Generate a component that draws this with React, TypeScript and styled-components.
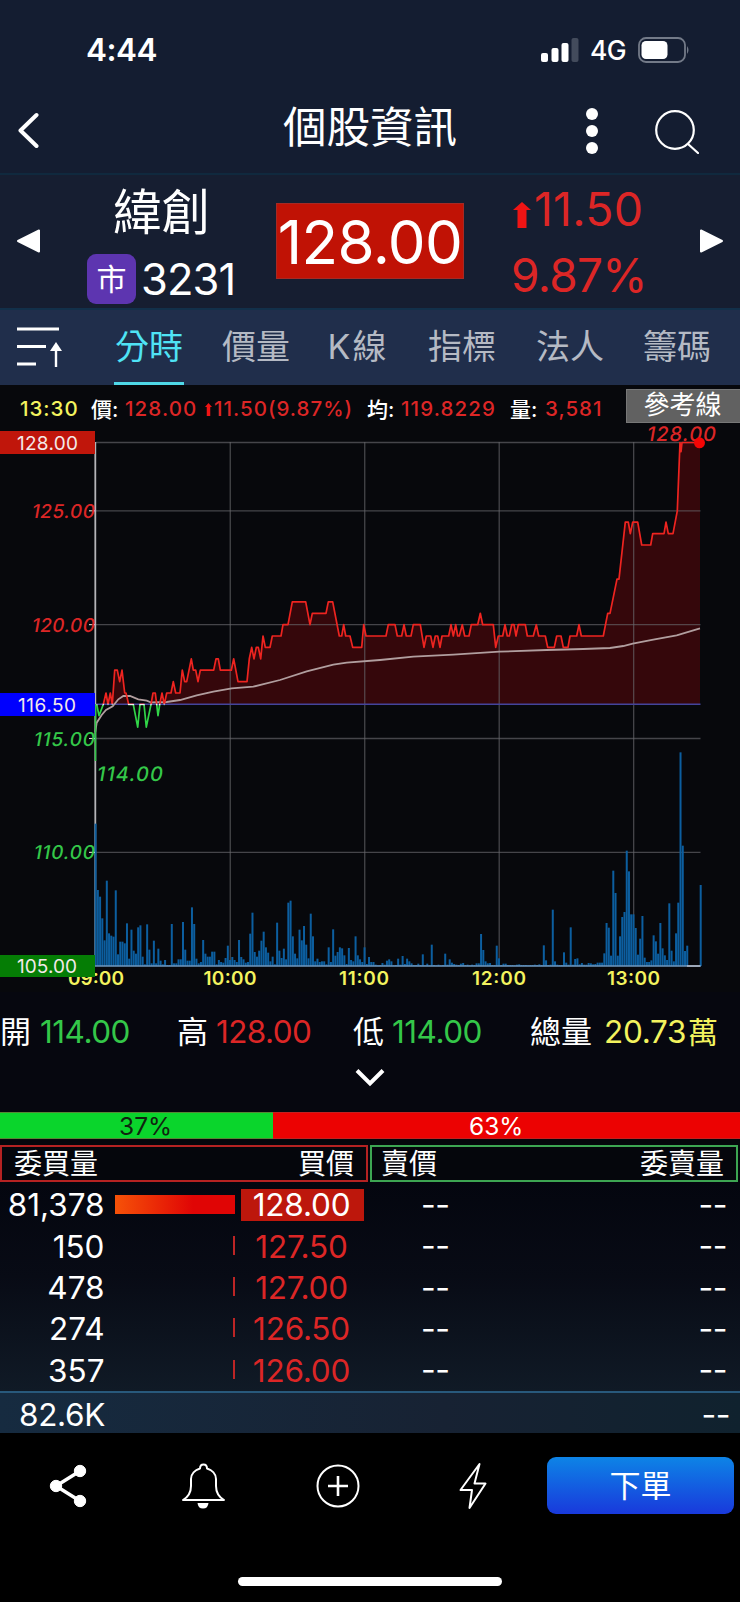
import React from 'react';
import styled, { createGlobalStyle } from 'styled-components';

const RED = '#dc2626';
const GREEN = '#34c749';
const YELLOW = '#f3f35e';

const GlobalStyle = createGlobalStyle`
  * { box-sizing: border-box; }
  body {
    margin: 0;
    background: #000;
    font-family: Inter, 'Noto Sans CJK TC', sans-serif;
    color: #fff;
  }
  svg { display: block; flex: none; }
`;

const Screen = styled.div`
  width: 740px;
  height: 1602px;
  display: flex;
  flex-direction: column;
  overflow: hidden;
  background: #05060c;
`;

const Label = styled.span<{ $size: number; $color?: string; $ls?: number; $weight?: number; $ml?: number; $width?: number; $align?: string }>`
  display: block;
  flex: none;
  white-space: nowrap;
  line-height: 1;
  font-size: ${(p) => p.$size}px;
  color: ${(p) => p.$color ?? '#fff'};
  letter-spacing: ${(p) => p.$ls ?? 0}px;
  font-weight: ${(p) => p.$weight ?? 400};
  margin-left: ${(p) => p.$ml ?? 0}px;
  width: ${(p) => (p.$width ? `${p.$width}px` : 'auto')};
  text-align: ${(p) => p.$align ?? 'left'};
`;

const StatusBar = styled.div`
  height: 84px;
  padding: 16px 50px 0 86px;
  display: flex;
  align-items: center;
  justify-content: space-between;
  background: #141d31;
`;

const StatusRight = styled.div`
  display: flex;
  align-items: center;
`;

const NavBar = styled.div`
  height: 91px;
  display: grid;
  grid-template-columns: 283px 174px 1fr 44px;
  align-items: center;
  padding: 0 41px 2px 0;
  background: #141d31;
  border-bottom: 2px solid #10293e;
`;

const NavCell = styled.div<{ $pl?: number; $pt?: number; $justify?: string }>`
  display: flex;
  justify-content: ${(p) => p.$justify ?? 'flex-start'};
  padding-left: ${(p) => p.$pl ?? 0}px;
  padding-top: ${(p) => p.$pt ?? 0}px;
`;

const Quote = styled.div`
  height: 133px;
  display: grid;
  grid-template-columns: 87px 189px 188px 49px 187px 40px;
  background: #161e31;
  align-items: start;
`;

const Arrow = styled.div<{ $pl?: number }>`
  padding: 54px 0 0 ${(p) => p.$pl ?? 0}px;
`;

const QuoteName = styled.div`
  padding-top: 14.5px;
  display: flex;
  flex-direction: column;
`;

const CodeRow = styled.div`
  margin-top: 16.5px;
  display: flex;
  align-items: center;
`;

const MarketBadge = styled.div`
  width: 49px;
  height: 50px;
  border-radius: 9px;
  background: #5d35b0;
  display: flex;
  align-items: center;
  justify-content: center;
`;

const PriceBox = styled.div`
  margin-top: 28px;
  height: 76px;
  padding-top: 2px;
  background: #c01205;
  border: 1px solid #a62a24;
  display: flex;
  align-items: center;
  justify-content: center;
`;

const Change = styled.div`
  display: flex;
  flex-direction: column;
`;

const ChangeRow = styled.div<{ $pt: number }>`
  padding-top: ${(p) => p.$pt}px;
  display: flex;
  align-items: center;
`;

const ArrowSlot = styled.div`
  padding-top: 12px;
`;

const TabBar = styled.div`
  height: 77px;
  display: flex;
  align-items: stretch;
  padding-left: 17px;
  background: #202e4b;
  border-top: 2px solid #12304a;
`;

const TabIcon = styled.div`
  width: 97px;
  padding-top: 17px;
`;

const Tab = styled.div<{ $active?: boolean; $gap: number; $ls?: number }>`
  width: 70px;
  margin-right: ${(p) => p.$gap}px;
  padding-top: 17px;
  text-align: center;
  white-space: nowrap;
  font-size: 34px;
  line-height: 40px;
  letter-spacing: ${(p) => p.$ls ?? 0}px;
  color: ${(p) => (p.$active ? '#4fe3f5' : '#b5bac4')};
  border-bottom: ${(p) => (p.$active ? '3px solid #4fd8e8' : 'none')};
`;

const ChartPanel = styled.div`
  height: 607px;
  display: flex;
  flex-direction: column;
  background: #07080c;
`;

const InfoRow = styled.div`
  height: 38px;
  padding-top: 4px;
  display: flex;
  align-items: flex-start;
`;

const InfoItem = styled.div<{ $ml: number }>`
  height: 41px;
  margin-left: ${(p) => p.$ml}px;
  display: flex;
  align-items: center;
`;

const RefLine = styled.div`
  width: 114px;
  height: 34px;
  margin-left: auto;
  padding: 0 2px 2px 0;
  display: flex;
  align-items: center;
  justify-content: center;
  background: #616161;
  border: 1px solid #777;
  border-right: 0;
  font-size: 26px;
  line-height: 1;
`;

const Stats = styled.div`
  height: 68px;
  padding-top: 12px;
  display: grid;
  grid-template-columns: 177px 176px 177px 1fr;
  align-items: center;
  background: #06070f;
`;

const Stat = styled.div`
  display: flex;
  align-items: center;
`;

const Expand = styled.div`
  height: 52px;
  display: flex;
  justify-content: center;
  padding-top: 9px;
  background: #06070f;
`;

const Ratio = styled.div`
  height: 27px;
  display: flex;
`;

const RatioPart = styled.div<{ $bg: string; $width: number; $pl: number }>`
  width: ${(p) => p.$width}px;
  display: flex;
  align-items: center;
  padding: 3px 0 0 ${(p) => p.$pl}px;
  background: ${(p) => p.$bg};
  border: solid rgba(160, 60, 60, 0.5);
  border-width: 1px 0;
`;

const BookHead = styled.div`
  height: 38px;
  margin: 6px 2px 0 0;
  display: grid;
  grid-template-columns: 368px 368px;
  gap: 2px;
`;

const BookHeadCell = styled.div<{ $color: string; $pad: string }>`
  display: flex;
  align-items: center;
  justify-content: space-between;
  border: 2px solid ${(p) => p.$color};
  padding: ${(p) => p.$pad};
  font-size: 28px;
  line-height: 1;
`;

const Book = styled.div`
  height: 209px;
  padding-top: 2px;
  background: linear-gradient(#04060f 0%, #080b15 45%, #101a26 100%);
`;

const BookRow = styled.div`
  height: 41.3px;
  display: grid;
  grid-template-columns: 104.5px 10.5px 120px 6px 123px 61px 24.5px 1fr 13px;
  align-items: center;
`;

const Qty = styled.div`
  text-align: right;
  font-size: 31.5px;
  line-height: 1;
  white-space: nowrap;
`;

const BarCell = styled.div`
  grid-column: 3;
  display: flex;
  justify-content: flex-end;
  padding-bottom: 2px;
`;

const Bar = styled.div<{ $full: boolean }>`
  width: ${(p) => (p.$full ? '120px' : '2px')};
  height: 19px;
  background: ${(p) => (p.$full ? 'linear-gradient(90deg, #f65208, #e00505 65%)' : '#bd2525')};
`;

const BidPrice = styled.div<{ $hot: boolean }>`
  grid-column: 5;
  height: 32px;
  padding-right: 2px;
  display: flex;
  align-items: center;
  justify-content: center;
  font-size: 31.5px;
  line-height: 1;
  letter-spacing: -0.2px;
  color: ${(p) => (p.$hot ? '#fff' : RED)};
  background: ${(p) => (p.$hot ? '#bd170c' : 'transparent')};
`;

const Dashes = styled.div<{ $col: number }>`
  grid-column: ${(p) => p.$col};
  font-size: 32px;
  line-height: 1;
  letter-spacing: -0.5px;
  white-space: nowrap;
  display: flex;
  justify-content: flex-end;
`;

const Total = styled.div`
  height: 42px;
  display: flex;
  justify-content: space-between;
  align-items: center;
  padding: 3px 10px 0 19px;
  border-top: 2px solid #28597c;
  background: linear-gradient(90deg, #162b40, #172233 60%, #10222e);
`;

const Footer = styled.div`
  height: 169px;
  display: flex;
  flex-direction: column;
  align-items: center;
  background: #000;
`;

const Actions = styled.div`
  width: 740px;
  height: 105px;
  padding-right: 6px;
  display: grid;
  grid-template-columns: 136px 135px 134px 135px 194px;
  align-items: center;
  justify-items: center;
`;

const OrderButton = styled.button`
  width: 187px;
  height: 57px;
  justify-self: end;
  border: 0;
  padding: 0;
  border-radius: 9px;
  color: #fff;
  font: 400 31px/1 Inter, 'Noto Sans CJK TC', sans-serif;
  background: linear-gradient(#0d84e6, #1939dc);
`;

const HomeIndicator = styled.div`
  margin-top: 38.5px;
  width: 264px;
  height: 9px;
  border-radius: 5px;
  background: #fff;
`;

const X0 = 95.5;
const STEP = 2.2411;
const TOP = 442.5;
const UNIT = 22.77;
const BASE = 966;
const yOf = (price: number) => TOP + (128 - price) * UNIT;

const early: [number, number][] = [
  [50, 116.5], [57, 116], [70, 116.5], [78, 117], [84, 116.5], [91, 117], [97, 116.5], [104, 118], [112, 118], [119, 117.5],
  [126, 118], [134, 117], [138, 117], [146, 116.5], [160, 116.5], [173, 115.5], [180, 116.5], [192, 116.5], [199, 115.5],
  [213, 116.5], [219, 117], [226, 117], [230, 116.5], [234, 116], [239, 116.5], [246, 117], [253, 116.5], [260, 117], [273, 117],
  [280, 117.5], [287, 117], [300, 117], [307, 118], [314, 117.5], [320, 117.5], [334, 118.5], [340, 118], [347, 118],
  [354, 117.5], [361, 118], [401, 118], [408, 118.5], [415, 118.5], [421, 118], [454, 118], [461, 118.5], [474, 117.5],
  [501, 117.5], [508, 118.5], [515, 119], [522, 118.5], [529, 119], [535, 119], [542, 118.5], [549, 119.5], [556, 119],
  [570, 119], [577, 119.5], [603, 119.5], [609, 120], [624, 120], [637, 121], [677, 121], [690, 120], [697, 120.5],
  [738, 120.5], [745, 121], [758, 121], [778, 119.5], [785, 119.5], [791, 120], [797, 119.5], [810, 119.5], [818, 119],
  [845, 119], [851, 120], [858, 119.5],
];
const late: [number, number][] = [
  [48, 119.5], [55, 120], [75, 120], [82, 119.5], [95, 119.5], [102, 120], [109, 119.5], [123, 119.5], [130, 120], [151, 120],
  [162, 119], [169, 119.5], [182, 119.5], [189, 119], [196, 119.5], [203, 119.5], [210, 119], [216, 119.5], [236, 119.5],
  [243, 120], [250, 119.5], [257, 120], [263, 119.5], [268, 119.5], [277, 120], [284, 119.5], [297, 119.5], [304, 120],
  [323, 120], [331, 120.5], [338, 120], [370, 120], [377, 119], [385, 119.5], [398, 119.5], [405, 120], [412, 119.5],
  [418, 119.5], [425, 120], [432, 120], [438, 119.5], [445, 120], [466, 120], [472, 119.5], [490, 119.5], [499, 120],
  [506, 119.5], [526, 119.5], [533, 119], [553, 119], [560, 119.5], [573, 119.5], [580, 119], [594, 119], [600, 119.5],
  [620, 119.5], [627, 120], [634, 119.5], [700, 119.5], [713, 120.5], [720, 120.5], [741, 122], [747, 122], [766, 124.5],
  [775, 124.5], [781, 124], [788, 124.5], [803, 124.5], [815, 123.5], [842, 123.5], [848, 124], [882, 124], [888, 124.5],
  [895, 124], [909, 124], [922, 125], [930, 128], [933, 127.6], [936, 128], [990, 128],
];
const prices = [
  ...early.map(([x, p]) => [80 + x / 3, yOf(p)]),
  ...late.map(([x, p]) => [370 + x / 3, yOf(p)]),
];
const pricePoints = prices.map(([x, y]) => `${x.toFixed(1)},${y.toFixed(1)}`).join(' ');
const ZERO = yOf(116.5);

const averages = [
  ...[[46, 456], [50, 428], [65, 405], [78, 390], [98, 379], [115, 358], [130, 348], [150, 348], [175, 358], [200, 362], [212, 367], [260, 366],
    [300, 360], [350, 346], [400, 335], [455, 325], [520, 320], [600, 300], [680, 274], [760, 254], [800, 248], [900, 240]].map(([x, y]) => [80 + x / 3, 580 + y / 3]),
  ...[[130, 830], [250, 824], [388, 815], [530, 810], [640, 807], [720, 804], [760, 798], [788, 791], [850, 779], [920, 766], [990, 745]].map(([x, y]) => [370 + x / 3, 380 + y / 3]),
];
const avgPoints = averages.map(([x, y]) => `${x.toFixed(1)},${y.toFixed(1)}`).join(' ');

const volumes = [
  427, 228, 208, 143, 77, 256, 98, 91, 88, 227, 35, 73, 73, 68, 128, 22, 109, 46, 37, 116, 122, 28, 5, 125, 49, 8, 76, 8, 52, 16,
  5, 18, 3, 3, 126, 8, 8, 20, 20, 132, 49, 16, 16, 176, 126, 22, 8, 12, 78, 37, 28, 28, 43, 43, 5, 18, 12, 10, 24, 61,
  18, 27, 18, 12, 78, 27, 20, 10, 12, 97, 160, 42, 28, 46, 76, 103, 56, 40, 14, 28, 5, 130, 46, 24, 52, 20, 190, 196, 89, 37,
  23, 109, 77, 120, 64, 23, 157, 89, 14, 22, 12, 14, 14, 5, 56, 12, 110, 31, 42, 56, 53, 32, 6, 54, 18, 14, 89, 32, 20, 12,
  56, 6, 27, 12, 12, 4, 2, 3, 9, 4, 16, 20, 14, 2, 3, 22, 4, 30, 6, 22, 14, 8, 3, 3, 7, 3, 35, 2, 7, 2,
  64, 3, 2, 4, 2, 3, 37, 4, 20, 10, 6, 4, 3, 7, 9, 3, 4, 2, 4, 3, 8, 8, 96, 48, 14, 8, 9, 3, 3, 61,
  23, 3, 7, 7, 3, 3, 3, 2, 4, 5, 3, 3, 3, 2, 3, 3, 4, 3, 5, 3, 62, 17, 3, 4, 169, 14, 4, 3, 3, 41,
  10, 4, 116, 4, 21, 23, 5, 9, 4, 4, 9, 8, 5, 6, 10, 10, 10, 38, 129, 115, 31, 286, 219, 31, 89, 147, 162, 346, 284, 155,
  155, 114, 34, 82, 150, 25, 12, 12, 17, 92, 74, 37, 129, 53, 32, 18, 188, 46, 14, 98, 190, 641, 361, 45, 61, 0, 0, 0, 0, 0, 243,
];

const gridY = [128, 125, 120, 115, 110];
const gridX = [60, 120, 180, 240];

const sideLabels = [
  { text: '125.00', price: 125, x: 31, color: RED },
  { text: '120.00', price: 120, x: 31, color: RED },
  { text: '115.00', price: 115, x: 33, color: GREEN },
  { text: '110.00', price: 110, x: 33, color: GREEN },
];
const tagLabels = [
  { text: '128.00', y: 442.5, x: 17, w: 61, bg: '#c0160b', h: 23 },
  { text: '116.50', y: 704.5, x: 18, w: 58, bg: '#0000fe', h: 23 },
  { text: '105.00', y: 966, x: 17, w: 60, bg: '#057d05', h: 22 },
];
const timeLabels = [
  { text: '09:00', x: 68, w: 56 }, { text: '10:00', x: 203.5, w: 53 }, { text: '11:00', x: 339, w: 50 },
  { text: '12:00', x: 472, w: 54 }, { text: '13:00', x: 607, w: 53 },
];

const Slanted = ({ x, y, size, color, width, text }: { x: number; y: number; size: number; color: string; width: number; text: string }) => (
  <text transform={`translate(${x} ${y}) skewX(-10)`} fontSize={size} fontWeight="500" fill={color} textLength={width}>{text}</text>
);

const PriceChart = () => (
  <svg width="740" height="569" viewBox="0 423 740 569" fontFamily="Inter, sans-serif" overflow="visible">
    <defs>
      <clipPath id="above"><rect x="0" y="423" width="740" height={ZERO - 423.4} /></clipPath>
      <clipPath id="level"><rect x="0" y={ZERO - 0.7} width="165" height="1.6" /></clipPath>
      <clipPath id="below"><rect x="0" y={ZERO + 0.7} width="740" height="200" /></clipPath>
    </defs>
    <polygon clipPath="url(#above)" fill="#35070b" points={`96.5,${ZERO} ${pricePoints} 700,${ZERO}`} />
    {gridY.map((p) => <line key={p} x1="96" x2="700.5" y1={yOf(p)} y2={yOf(p)} stroke="#67676b" strokeOpacity=".65" strokeWidth="1.3" />)}
    {gridX.map((m) => <line key={m} x1={X0 + 0.3 + m * STEP} x2={X0 + 0.3 + m * STEP} y1="442" y2="966" stroke="#67676b" strokeOpacity=".65" strokeWidth="1.3" />)}
    <line x1="96" x2="700.5" y1={ZERO} y2={ZERO} stroke="#44449c" strokeWidth="1.5" />
    {timeLabels.map((t) => (
      <text key={t.text} x={t.x} y="985" fontSize="19" fontWeight="600" fill={YELLOW} textLength={t.w}>{t.text}</text>
    ))}
    <line x1="95.3" x2="95.3" y1="442" y2="966" stroke="#b4b4b8" strokeWidth="1.8" />
    {volumes.map((v, i) => <rect key={i} x={X0 - 0.9 + i * STEP} y={BASE - v / 3} width="2" height={v / 3} fill="#0c5e9f" />)}
    <line x1="95" x2="701" y1="966" y2="966" stroke="#7199bf" strokeWidth="1.3" />
    <line x1="687" x2="700" y1="966" y2="966" stroke="#c4c4cf" strokeWidth="1.3" />
    <polyline points={avgPoints} fill="none" stroke="#b19e9f" strokeWidth="1.8" />
    <polyline clipPath="url(#above)" points={pricePoints} fill="none" stroke="#ee2420" strokeWidth="1.7" strokeLinejoin="round" />
    <polyline clipPath="url(#below)" points={pricePoints} fill="none" stroke="#31d548" strokeWidth="1.7" strokeLinejoin="round" />
    <polyline clipPath="url(#level)" points={pricePoints} fill="none" stroke="#f1f1f1" strokeWidth="1.5" />
    <line x1="95.5" x2="95.5" y1="704" y2="761" stroke="#31c548" strokeWidth="1.6" />
    {sideLabels.map((l) => (
      <g key={l.text}>
        <line x1="89" x2="95" y1={yOf(l.price)} y2={yOf(l.price)} stroke="#ddd" strokeWidth="1.1" />
        <Slanted x={l.x} y={yOf(l.price) + 7} size={19} color={l.color} width={94 - l.x} text={l.text} />
      </g>
    ))}
    {tagLabels.map((l) => (
      <g key={l.text}>
        <rect x="0" y={l.y - l.h / 2} width="95" height={l.h} fill={l.bg} />
        <text x={l.x} y={l.y + 7} fontSize="19" fill="#f4e9e9" textLength={l.w}>{l.text}</text>
      </g>
    ))}
    <Slanted x={96} y={781} size={20} color={GREEN} width={66} text="114.00" />
    <Slanted x={646} y={440.5} size={20} color={RED} width={69} text="128.00" />
    <circle cx="699.5" cy="442.8" r="5.5" fill="#f40505" />
  </svg>
);

const tabs = [
  { text: '分時', gap: 37 }, { text: '價量', gap: 32 }, { text: 'K線', gap: 34, ls: 2 },
  { text: '指標', gap: 38 }, { text: '法人', gap: 37 }, { text: '籌碼', gap: 0 },
];

const bids = [
  { qty: '81,378', price: '128.00' }, { qty: '150', price: '127.50' }, { qty: '478', price: '127.00' },
  { qty: '274', price: '126.50' }, { qty: '357', price: '126.00' },
];

const UpArrow = ({ w, h }: { w: number; h: number }) => (
  <svg width={w} height={h} viewBox="0 0 18 26" preserveAspectRatio="none">
    <path d="M9 0 18 8H13.5V26H4.500V8H0Z" fill="#f01414" />
  </svg>
);

export default function App() {
  return (
    <Screen>
      <GlobalStyle />
      <StatusBar>
        <Label $size={31.5} $weight={600} $ls={-0.5}>4:44</Label>
        <StatusRight>
          <svg width="38" height="24" viewBox="0 0 38 24" fill="#fff">
            <rect x="0" y="15" width="7" height="9" rx="2" />
            <rect x="10.5" y="10" width="7" height="14" rx="2" />
            <rect x="20.5" y="5" width="7" height="19" rx="2" />
            <rect x="30.5" y="0" width="7" height="24" rx="2" fill="#434b5c" />
          </svg>
          <Label $size={26.5} $weight={500} $ml={11} $ls={-0.6} $width={48}>4G</Label>
          <svg width="52" height="26" viewBox="0 0 52 26">
            <rect x="1" y="1" width="46" height="24" rx="7" fill="none" stroke="#737a88" strokeWidth="1.8" />
            <rect x="3.5" y="4" width="26" height="18" rx="4.5" fill="#fff" />
            <path d="M49 9Q52 13 49 17Z" fill="#737a88" />
          </svg>
        </StatusRight>
      </StatusBar>
      <NavBar>
        <NavCell $pl={18} $pt={6}>
          <svg width="22" height="37" viewBox="0 0 22 37" fill="none" stroke="#fff" strokeWidth="4" strokeLinecap="round" strokeLinejoin="round">
            <path d="M18.5 3 2.5 18.5 18.5 34" />
          </svg>
        </NavCell>
        <Label $size={43.5}>個股資訊</Label>
        <NavCell $justify="flex-end" $pt={8}>
          <svg width="112" height="48" viewBox="0 0 112 48" fill="#fff">
            <circle cx="49" cy="7" r="6" /><circle cx="49" cy="24" r="6" /><circle cx="49" cy="41" r="6" />
          </svg>
        </NavCell>
        <NavCell $pt={8}>
          <svg width="44" height="45" viewBox="0 0 44 45" fill="none" stroke="#fff" strokeWidth="2.2" strokeLinecap="round">
            <circle cx="20" cy="21" r="18.8" /><path d="M33 35 43 44" />
          </svg>
        </NavCell>
      </NavBar>
      <Quote>
        <Arrow $pl={16}>
          <svg width="24" height="24" viewBox="0 0 24 24"><path d="M2 12 23 1.5V22.5Z" fill="#fff" stroke="#fff" strokeWidth="2" strokeLinejoin="round" /></svg>
        </Arrow>
        <QuoteName>
          <Label $size={48.5} $ml={26}>緯創</Label>
          <CodeRow>
            <MarketBadge><Label $size={30}>市</Label></MarketBadge>
            <Label $size={43.5} $ml={5} $ls={-0.9}>3231</Label>
          </CodeRow>
        </QuoteName>
        <PriceBox><Label $size={60} $ls={-0.6}>128.00</Label></PriceBox>
        <span />
        <Change>
          <ChangeRow $pt={11}>
            <ArrowSlot><UpArrow w={18} h={26} /></ArrowSlot>
            <Label $size={46.5} $color={RED} $ml={3} $ls={0.2}>11.50</Label>
          </ChangeRow>
          <ChangeRow $pt={20}><Label $size={46} $color={RED} $ml={-2} $ls={-0.7}>9.87%</Label></ChangeRow>
        </Change>
        <Arrow>
          <svg width="24" height="24" viewBox="0 0 24 24"><path d="M22 12 1 1.5V22.5Z" fill="#fff" stroke="#fff" strokeWidth="2" strokeLinejoin="round" /></svg>
        </Arrow>
      </Quote>
      <TabBar>
        <TabIcon>
          <svg width="46" height="42" viewBox="0 0 46 42" fill="none" stroke="#fff" strokeWidth="3">
            <path d="M0 2H42M0 19.5H29M0 37H19" /><path d="M39 40V20" strokeWidth="2.4" /><path d="M33 24 39 15 45 24Z" fill="#fff" stroke="none" />
          </svg>
        </TabIcon>
        {tabs.map((t, i) => <Tab key={t.text} $active={i === 0} $gap={t.gap} $ls={t.ls}>{t.text}</Tab>)}
      </TabBar>
      <ChartPanel>
        <InfoRow>
          <InfoItem $ml={20}><Label $size={20.5} $weight={500} $color={YELLOW} $ls={1} $width={71}>13:30</Label></InfoItem>
          <InfoItem $ml={0}>
            <Label $size={21} $weight={500} $width={34}>價:</Label>
            <Label $size={20.5} $weight={500} $color={RED} $ls={1.1} $width={80}>128.00</Label>
            <UpArrow w={7} h={13} />
            <Label $size={20.5} $weight={500} $color={RED} $ls={1} $ml={2} $width={154}>11.50(9.87%)</Label>
          </InfoItem>
          <InfoItem $ml={-1}>
            <Label $size={21} $weight={500} $width={34}>均:</Label>
            <Label $size={20.5} $weight={500} $color={RED} $ls={1.1} $width={109}>119.8229</Label>
          </InfoItem>
          <InfoItem $ml={0}>
            <Label $size={21} $weight={500} $width={35}>量:</Label>
            <Label $size={20.5} $weight={500} $color={RED} $ls={1}>3,581</Label>
          </InfoItem>
          <RefLine>參考線</RefLine>
        </InfoRow>
        <PriceChart />
      </ChartPanel>
      <Stats>
        <Stat><Label $size={31} $width={40}>開</Label><Label $size={31.5} $ls={-0.5} $color={GREEN}>114.00</Label></Stat>
        <Stat><Label $size={31} $width={39}>高</Label><Label $size={31.5} $ls={-0.6} $color={RED}>128.00</Label></Stat>
        <Stat><Label $size={31} $width={39}>低</Label><Label $size={31.5} $ls={-0.5} $color={GREEN}>114.00</Label></Stat>
        <Stat><Label $size={31} $width={74}>總量</Label><Label $size={31.5} $ls={-0.3} $color={YELLOW} $width={84}>20.73</Label><Label $size={30} $color={YELLOW}>萬</Label></Stat>
      </Stats>
      <Expand>
        <svg width="30" height="18" viewBox="0 0 30 18" fill="none" stroke="#fff" strokeWidth="4"><path d="M2 1.5 15 14.5 28 1.5" /></svg>
      </Expand>
      <Ratio>
        <RatioPart $bg="#0ad52c" $width={273} $pl={119}><Label $size={24.5} $color="#10240f">37%</Label></RatioPart>
        <RatioPart $bg="#ec0202" $width={467} $pl={196}><Label $size={24.5}>63%</Label></RatioPart>
      </Ratio>
      <BookHead>
        <BookHeadCell $color="#b52222" $pad="1px 12px 0 12px"><span>委買量</span><span>買價</span></BookHeadCell>
        <BookHeadCell $color="#3da552" $pad="1px 12px 0 9px"><span>賣價</span><span>委賣量</span></BookHeadCell>
      </BookHead>
      <Book>
        {bids.map((b, i) => (
          <BookRow key={b.price}>
            <Qty>{b.qty}</Qty>
            <BarCell><Bar $full={i === 0} /></BarCell>
            <BidPrice $hot={i === 0}>{b.price}</BidPrice>
            <Dashes $col={7}>--</Dashes>
            <Dashes $col={8}>--</Dashes>
          </BookRow>
        ))}
      </Book>
      <Total><Label $size={31.5} $ls={-0.3}>82.6K</Label><Label $size={32} $ls={-0.5}>--</Label></Total>
      <Footer>
        <Actions>
          <svg width="38" height="44" viewBox="0 0 38 44" fill="#fff" stroke="#fff">
            <path d="M31 7 7 22 31 37" fill="none" strokeWidth="3.5" /><circle cx="31" cy="7" r="5.7" /><circle cx="7" cy="22" r="5.7" /><circle cx="31" cy="37" r="5.7" />
          </svg>
          <svg width="45" height="46" viewBox="0 0 45 46" fill="none" stroke="#fff" strokeWidth="2" strokeLinejoin="round">
            <path d="M2 37C7 34 10 29 10 23V16C10 11 14 7 19 5.5 19 0 26 0 26 5.5 31 7 35 11 35 16V23C35 29 38 34 43 37Z" />
            <path d="M16.5 40H27.500Q27 45.500 22 45.500T16.500 40Z" fill="#fff" stroke="none" />
          </svg>
          <svg width="44" height="44" viewBox="0 0 44 44" fill="none" stroke="#fff" strokeWidth="2">
            <circle cx="22" cy="22" r="20.500" /><path d="M12 22H32M22 12V32" strokeWidth="2.600" />
          </svg>
          <svg width="28" height="48" viewBox="0 0 28 48" fill="none" stroke="#fff" strokeWidth="2" strokeLinejoin="round">
            <path d="M20.500 2 1.500 28H13L10.500 46 26.500 21.500H15.500Z" />
          </svg>
          <OrderButton>下單</OrderButton>
        </Actions>
        <HomeIndicator />
      </Footer>
    </Screen>
  );
}
